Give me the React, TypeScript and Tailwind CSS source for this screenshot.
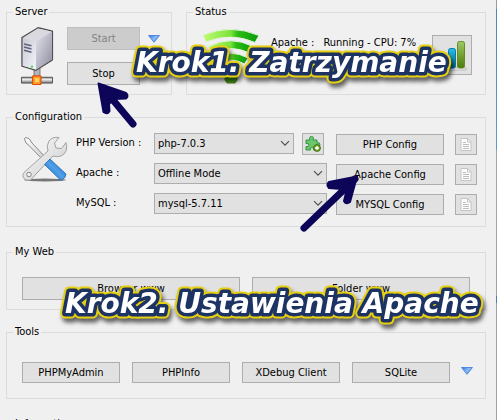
import type { ButtonHTMLAttributes, ReactNode } from "react";

function Group({ title, children, className = "" }: { title: string; children?: ReactNode; className?: string }) {
  return (
    <fieldset className={`min-w-0 border border-[#dcdcdc] px-[6px] ${className}`}>
      <legend className="px-[2px] leading-4">{title}</legend>
      {children}
    </fieldset>
  );
}

function Button({ className = "", ...props }: ButtonHTMLAttributes<HTMLButtonElement>) {
  return (
    <button
      type="button"
      className={`flex items-center justify-center whitespace-nowrap border border-[#adadad] bg-[#e1e1e1] leading-4 disabled:border-[#bfbfbf] disabled:bg-[#cccccc] disabled:text-[#838383] ${className}`}
      {...props}
    />
  );
}

function Select({ id, value }: { id: string; value: string }) {
  return (
    <div className="relative min-w-0 flex-1">
      <select id={id} defaultValue={value} className="block h-[21px] w-full appearance-none border border-[#adadad] bg-[#e1e1e1] pl-[3px] pr-5 leading-4">
        <option>{value}</option>
      </select>
      <svg className="pointer-events-none absolute right-1 top-[7px]" width="10" height="7" viewBox="0 0 10 7" fill="none" stroke="#505050" strokeWidth="1.2" aria-hidden="true">
        <path d="M1 1.2 5 5.2 9 1.2" />
      </svg>
    </div>
  );
}

function Triangle({ label }: { label: string }) {
  return (
    <button type="button" aria-label={label} className="block h-2 w-3 shrink-0">
      <svg width="12" height="8" viewBox="0 0 12 8">
        <defs>
          <linearGradient id="tri" x1="0" x2="1" y1="0" y2="0.6">
            <stop offset="0" stopColor="#2f6fdc" />
            <stop offset="0.6" stopColor="#8dbcf5" />
            <stop offset="1" stopColor="#3a78dd" />
          </linearGradient>
        </defs>
        <path d="M.5.5h11L6 7.3z" fill="url(#tri)" stroke="#3b78dc" strokeWidth=".8" />
      </svg>
    </button>
  );
}

function ServerIcon() {
  return (
    <svg width="34" height="58" viewBox="0 0 34 60" preserveAspectRatio="none" className="shrink-0" aria-hidden="true">
      <defs>
        <linearGradient id="srvFront" x1="0" x2="1" y1="0" y2="1">
          <stop offset="0" stopColor="#c9c9d6" />
          <stop offset="1" stopColor="#f4f4fa" />
        </linearGradient>
        <linearGradient id="srvSide" x1="0" x2="1" y1="0" y2="1">
          <stop offset="0" stopColor="#e4e4ec" />
          <stop offset="1" stopColor="#8c8ca0" />
        </linearGradient>
        <linearGradient id="pipe" x1="0" x2="0" y1="0" y2="1">
          <stop offset="0" stopColor="#8a8a8a" />
          <stop offset=".4" stopColor="#ededed" />
          <stop offset="1" stopColor="#707070" />
        </linearGradient>
      </defs>
      <path d="M14 40h6v14h-6z" fill="#b4b4bb" stroke="#666" strokeWidth=".8" />
      <path d="M1.5 52h31v6h-31z" fill="url(#pipe)" stroke="#555" />
      <path d="M2 11 18 .8 32.4 4.2V34L16 44.8 2 40.5z" fill="#d8d8e2" stroke="#505050" strokeWidth="1.4" strokeLinejoin="round" />
      <path d="M2.8 11.5 16 15v29L2.8 40z" fill="url(#srvFront)" />
      <path d="M16 15 31.6 5v28.5L16 44z" fill="url(#srvSide)" />
      <path d="M3 11 18 1.6l13.4 3.1L16 14.6z" fill="#d9d9df" />
      <path d="m4 17.5 7.5 2M4 20.8l7.5 2M4 24.1l7.5 2" stroke="#62627c" strokeWidth="1.6" />
      <circle cx="12" cy="41" r="1.2" fill="#48d848" />
      <rect x="12.5" y="50.5" width="8.5" height="9" rx="1" fill="#ff9c28" stroke="#dd4b08" strokeWidth="1.2" />
      <path d="M15 53h4v4h-4z" fill="#ffd36b" />
    </svg>
  );
}

function SignalIcon() {
  return (
    <svg width="58" height="57" viewBox="0 0 58 57" className="shrink-0" aria-hidden="true">
      <defs>
        <linearGradient id="sig" x1="0" x2="1" y1="0" y2="0">
          <stop offset="0" stopColor="#c0fb72" />
          <stop offset=".5" stopColor="#7be33a" />
          <stop offset=".62" stopColor="#2cbc13" />
          <stop offset="1" stopColor="#079c0b" />
        </linearGradient>
      </defs>
      <g fill="url(#sig)" stroke="#e3f2dc" strokeWidth="1">
        <path d="M1 8Q29-3.500 57 8.500L53 15.500Q29 5 4 15z" />
        <path d="M6 19.500Q29 8 51 19.500L47.500 26Q29 17 10 26z" />
        <path d="M12 31Q29 21.500 46 31L42.500 37Q29 29.500 16 37z" />
        <path d="M18 41Q29 35 40 41L37 46Q29 42 21 46z" />
      </g>
      <path d="M23 49q6-3 12 0v4l-2 3h-8l-2-3z" fill="#419b18" stroke="#57831f" />
    </svg>
  );
}

function ChartIcon() {
  return (
    <svg width="34" height="34" viewBox="0 0 34 34" aria-hidden="true">
      <defs>
        <linearGradient id="barBlue" x1="0" x2="0" y1="0" y2="1">
          <stop offset="0" stopColor="#24c0ee" />
          <stop offset="1" stopColor="#0a5f86" />
        </linearGradient>
        <linearGradient id="barGreen" x1="0" x2="0" y1="0" y2="1">
          <stop offset="0" stopColor="#9fc965" />
          <stop offset="1" stopColor="#4b7c08" />
        </linearGradient>
      </defs>
      <path d="M2 30h29v2H2z" fill="#fafafa" stroke="#aaa" strokeWidth=".8" />
      <rect x="4" y="20" width="7" height="10" rx="1.500" fill="#e08b28" />
      <rect x="13.500" y="10.500" width="7" height="19.500" rx="2" fill="url(#barBlue)" stroke="#087ba7" />
      <rect x="22.500" y="3.500" width="7" height="26.500" rx="2" fill="url(#barGreen)" stroke="#5f9024" />
    </svg>
  );
}

function ToolsIcon() {
  return (
    <svg width="46" height="46" viewBox="0 0 46 46" className="shrink-0" aria-hidden="true">
      <defs>
        <linearGradient id="steel" x1="0" x2="1" y1="0" y2="1">
          <stop offset="0" stopColor="#ffffff" />
          <stop offset="1" stopColor="#c8c8c8" />
        </linearGradient>
        <linearGradient id="handle" x1="0" x2="1" y1="1" y2="0">
          <stop offset="0" stopColor="#0c5aae" />
          <stop offset=".5" stopColor="#4fa0ea" />
          <stop offset="1" stopColor="#1560b0" />
        </linearGradient>
      </defs>
      <ellipse cx="23" cy="44" rx="21" ry="1.500" fill="#777" />
      <path d="M3.500 1.500 7 2.500l3 4.500 15 16-2.500 2.500L7 9.500 4 7 2.500 3z" fill="url(#steel)" stroke="#8a8a8a" />
      <path d="M44 6.500 39.500 12.500l-5.500-.5-1.500-5L37 1.500Q30 .5 27 5t-1 10L2 36.500Q-.5 40 2 42.500t6.500 1.500L31 20q7 2 11-2t2-11.500z" fill="url(#steel)" stroke="#a2a2a2" />
      <circle cx="7" cy="38.500" r="2.300" fill="#eee" stroke="#888" />
      <path d="m22.500 28.500 5.500-5.500L44 38q0 4-5 6.500z" fill="url(#handle)" stroke="#2569ae" strokeWidth=".8" />
    </svg>
  );
}

function PuzzleIcon() {
  return (
    <svg width="16" height="16" viewBox="0 0 16 16" aria-hidden="true">
      <path d="M1 4h4q-1.500-3.500 1.500-3.500T8 4h4v3q3-1 3 1.500T12 10v4H8.500q1-2.500-1.500-2.500T5.500 14H1v-3.500q3 .5 3-1.500T1 7.500z" fill="#6cc66c" stroke="#2f9546" />
      <circle cx="12" cy="12" r="3.500" fill="#6a9d23" stroke="#456e13" strokeWidth=".8" />
      <path d="M12 10v4M10 12h4" stroke="#fff" strokeWidth="1.400" />
    </svg>
  );
}

function DocIcon() {
  return (
    <svg width="12" height="13" viewBox="0 0 12 13" aria-hidden="true">
      <path d="M1 .5h6.500L11 4v8.500H1z" fill="#fdfdfd" stroke="#c4c4c4" />
      <path d="M7.500.5V4H11" fill="none" stroke="#c4c4c4" />
      <path d="M3 4.500h3M3 6.500h6M3 8.500h6M3 10.500h6" stroke="#bdbdbd" />
    </svg>
  );
}

const services = [
  { id: "php", label: "PHP Version :", value: "php-7.0.3" },
  { id: "apache", label: "Apache :", value: "Offline Mode" },
  { id: "mysql", label: "MySQL :", value: "mysql-5.7.11" },
];

function Caption({ id, y, x, text }: { id: string; x: number; y: number; text: string }) {
  return (
    <g className="[filter:drop-shadow(2px_4px_2px_rgb(0_0_0/0.6))]" strokeLinejoin="round">
      <use href={`#${id}`} stroke="#e6cf12" strokeWidth="11" />
      <g stroke="#1c3364" strokeWidth="7">
        <text id={id} x={x} y={y} fill="#fff" className="[paint-order:stroke]">{text}</text>
      </g>
    </g>
  );
}

function Annotations() {
  return (
    <svg
      className="pointer-events-none absolute left-0 top-0 font-['DejaVu_Sans',Verdana,sans-serif] text-[28px] font-bold italic"
      width="497"
      height="420"
      viewBox="0 0 497 420"
    >
      <g fill="none" stroke="#0d0558" strokeWidth="7" strokeLinecap="round" strokeLinejoin="round">
        <path d="M133 124 103 88" />
        <path d="M355 179 304 228" />
      </g>
      <g fill="#0d0558" stroke="#0d0558" strokeLinejoin="round" strokeWidth="2">
        <path d="M98.500 83.500 126 93q3 3 0 5.500l-12 .5-5 5 .5 7q-2 4-6 1z" />
        <path d="M357 176.500 329 182q-3 3 0 6l12 1 5 4-2 8q2 4 6 1z" />
      </g>
      <Caption id="step-one" x={136} y={72} text="Krok1. Zatrzymanie" />
      <Caption id="step-two" x={65} y={313} text="Krok2. Ustawienia Apache" />
    </svg>
  );
}

export default function App() {
  return (
    <div className="relative flex h-screen overflow-hidden bg-[#f0f0f0] font-['DejaVu_Sans_Condensed','DejaVu_Sans',Tahoma,sans-serif] text-[11px] leading-4 text-black">
      <main className="min-w-0 flex-1 pb-1 pl-[6px] pr-[10px] pt-1">
        <div className="flex gap-[14px]">
          <Group title="Server" className="w-[166px] shrink-0">
            <div className="flex pb-[9px] pl-[7px] pt-[7px]">
              <ServerIcon />
              <div className="ml-[13px] flex w-[73px] flex-col gap-3">
                <Button disabled className="h-[23px]">Start</Button>
                <Button className="h-[23px]">Stop</Button>
              </div>
              <div className="ml-2 pt-2">
                <Triangle label="Server menu" />
              </div>
            </div>
          </Group>
          <Group title="Status" className="flex-1">
            <div className="flex px-[7px] pt-[7px]">
              <div className="pl-[2px]">
                <SignalIcon />
              </div>
              <p className="ml-[11px] flex flex-1 gap-[9px] whitespace-nowrap pt-2">
                <span>Apache :</span>
                <span>Running - CPU: 7%</span>
              </p>
              <div className="pt-2">
                <Button aria-label="Statistics" className="h-10 w-10"><ChartIcon /></Button>
              </div>
            </div>
          </Group>
        </div>

        <Group title="Configuration" className="mt-[14px]">
          <div className="flex pb-[11px] pl-[9px] pr-[2px] pt-2">
            <div className="pt-[3px]">
              <ToolsIcon />
            </div>
            <div className="ml-2 flex min-w-0 flex-1 flex-col gap-[9px]">
              {services.map((s) => (
                <div key={s.id} className="flex h-[21px]">
                  <label htmlFor={s.id} className="w-[78px] shrink-0 whitespace-nowrap pt-[2px]">{s.label}</label>
                  <Select id={s.id} value={s.value} />
                  {s.id === "php" && (
                    <Button aria-label="PHP extensions" className="ml-2 mr-[3px] h-[22px] w-[22px] shrink-0"><PuzzleIcon /></Button>
                  )}
                </div>
              ))}
            </div>
            <div className="ml-[9px] grid grid-cols-[108px_22px] gap-x-[11px] gap-y-[9px] pt-px">
              {["PHP", "Apache", "MYSQL"].map((name) => (
                <div key={name} className="contents">
                  <Button className="h-[21px]">{name} Config</Button>
                  <Button aria-label={`${name} log`} className="h-[21px]"><DocIcon /></Button>
                </div>
              ))}
            </div>
          </div>
        </Group>

        <Group title="My Web" className="mt-[17px]">
          <div className="flex gap-3 px-[9px] pb-[9px] pt-[17px]">
            <Button className="h-[23px] flex-1">Browser www</Button>
            <Button className="h-[23px] flex-1">Folder www</Button>
          </div>
        </Group>

        <Group title="Tools" className="mt-[14px]">
          <div className="flex pb-[15px] pl-[9px] pr-[6px] pt-[22px]">
            <div className="grid flex-1 grid-cols-4 gap-3">
              <Button className="h-[21px]">PHPMyAdmin</Button>
              <Button className="h-[21px]">PHPInfo</Button>
              <Button className="h-[21px]">XDebug Client</Button>
              <Button className="h-[21px]">SQLite</Button>
            </div>
            <div className="ml-[11px] pt-[5px]">
              <Triangle label="More tools" />
            </div>
          </div>
        </Group>

        <Group title="Information" className="mt-[17px] h-16" />
      </main>
      <div className="w-px shrink-0 bg-[linear-gradient(#9a9a9a_9px,#4f86b4_9px,#5f9bcb_150px,#a0a8b0_150px,#a0a0a0_296px,#4f7fb0_296px,#4f7fb0_303px,#a0a0a0_303px)]" />
      <Annotations />
    </div>
  );
}
